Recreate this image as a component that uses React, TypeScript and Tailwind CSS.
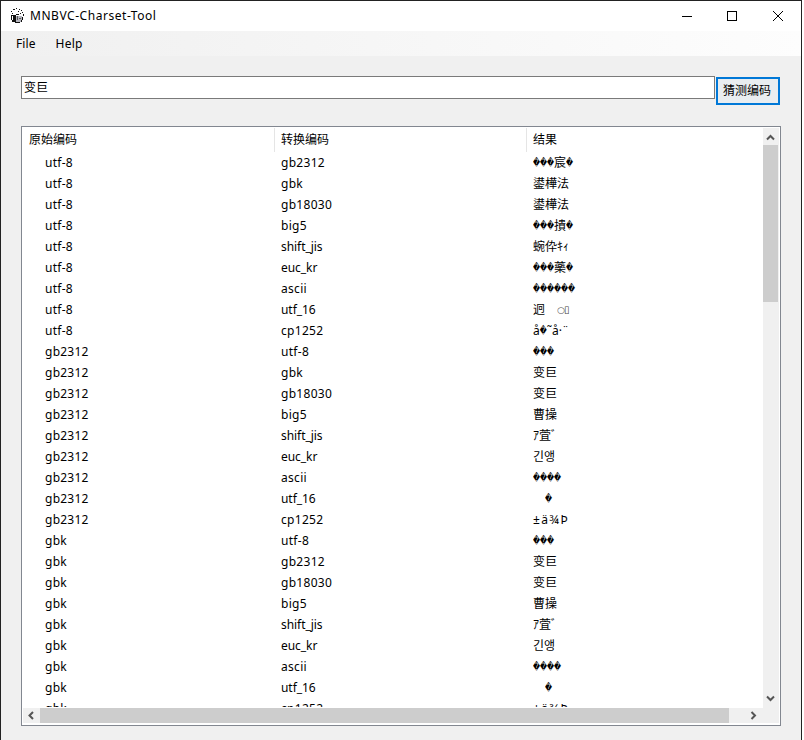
import React from "react";

const ROWS: [string, string, string][] = [
  ["utf-8", "gb2312", "���宸�"],
  ["utf-8", "gbk", "鍙樺法"],
  ["utf-8", "gb18030", "鍙樺法"],
  ["utf-8", "big5", "���撌�"],
  ["utf-8", "shift_jis", "蜿伜ｷｨ"],
  ["utf-8", "euc_kr", "���\u85E5�"],
  ["utf-8", "ascii", "������"],
  ["utf-8", "utf_16", "迥\u3000○▯"],
  ["utf-8", "cp1252", "å�˜å·¨"],
  ["gb2312", "utf-8", "���"],
  ["gb2312", "gbk", "变巨"],
  ["gb2312", "gb18030", "变巨"],
  ["gb2312", "big5", "曹操"],
  ["gb2312", "shift_jis", "ｱ萓ﾞ"],
  ["gb2312", "euc_kr", "긴앵"],
  ["gb2312", "ascii", "����"],
  ["gb2312", "utf_16", "\u3000�"],
  ["gb2312", "cp1252", "±ä¾Þ"],
  ["gbk", "utf-8", "���"],
  ["gbk", "gb2312", "变巨"],
  ["gbk", "gb18030", "变巨"],
  ["gbk", "big5", "曹操"],
  ["gbk", "shift_jis", "ｱ萓ﾞ"],
  ["gbk", "euc_kr", "긴앵"],
  ["gbk", "ascii", "����"],
  ["gbk", "utf_16", "\u3000�"],
  ["gbk", "cp1252", "±ä¾Þ"],
];

function Result({ text }: { text: string }) {
  const parts = text.split(/([�]+|[○]|[▯]|±ä¾Þ)/).filter(Boolean);
  return (
    <span className="flex h-[21px] items-center">
      {parts.map((p, i) => {
        if (p[0] === "�")
          return (
            <span key={i} className="inline-block scale-y-[1.5] font-['DejaVu_Sans'] text-[6.83px] leading-[12px]">{p}</span>
          );
        if (p === "○")
          return <span key={i} className="w-[7px] font-['DejaVu_Sans'] text-[9px] leading-[12px] text-[#555]">{p}</span>;
        if (p === "▯")
          return <span key={i} className="w-[5px] font-['DejaVu_Sans'] text-[10px] leading-[12px] text-[#444]">{p}</span>;
        if (p[0] === "±") return <span key={i} className="tracking-[1.5px]">{p}</span>;
        return <span key={i}>{p}</span>;
      })}
    </span>
  );
}

function Chevron({ d, className }: { d: string; className: string }) {
  return (
    <svg className={className} viewBox="0 0 9 9" width="9" height="9">
      <path d={d} fill="none" stroke="#555" strokeWidth="2" />
    </svg>
  );
}

function AppIcon() {
  return (
    <svg width="16" height="16" viewBox="0 0 16 16" shapeRendering="crispEdges">
      <path d="M3 1h2v1H3zM6 0h1v1H6zM9 1h1v1H9zM11 2h1v1h-1zM1 3h1v1H1zM8 3h1v1H8zM12 4h1v1h-1zM2 5h1v1H2zM10 5h1v1h-1zM13 6h1v2h-1zM1 7h5v1H1zM1 8h1v4H1zM3 8h3v6H3zM6 6h3v1H6zM2 12h1v2H2zM5 14h5v1H5zM12 9h1v3h-1zM11 12h1v2h-1z" fill="#111" />
      <path d="M6 8h6v4h-1v2H6z" fill="#b4b4bc" />
      <path d="M7 8h1v4H7zM9 10h2v1H9z" fill="#555" />
    </svg>
  );
}

export default function App() {
  return (
    <div className="h-[740px] w-[804px] overflow-hidden bg-white font-['Noto_Sans','Noto_Sans_CJK_SC',sans-serif] text-[12px] text-black">
      <div className="flex h-full w-[802px] flex-col border-x border-t border-[#222] bg-[#f0f0f0]">
        <header className="flex h-[30px] shrink-0 items-center bg-white pl-[9px]">
          <AppIcon />
          <span className="ml-[4px] text-[12px] tracking-[0.54px]">MNBVC-Charset-Tool</span>
          <svg className="mr-[17px] ml-auto" width="103" height="12" viewBox="0 0 103 12" fill="none" stroke="#000">
            <path d="M1 6.5h10" />
            <rect x="46.5" y="1.5" width="9" height="9" />
            <path d="M92 1l10 10m0-10l-10 10" />
          </svg>
        </header>
        <nav className="flex h-[25px] shrink-0 items-center gap-[20px] bg-linear-to-r from-[#f0f0f0] to-[#fdfdfd] pt-px pl-[15px]">
          <span className="tracking-[0.1px]">File</span>
          <span className="tracking-[0.2px]">Help</span>
        </nav>
        <main className="flex flex-col pt-[20px] pl-[20px]">
          <div className="flex h-[30px] items-start gap-px">
            <div className="flex h-[23px] w-[694px] items-center border border-[#7a7a7a] bg-white pl-[2px]">变巨</div>
            <button className="mt-px flex h-[28px] w-[64px] items-center justify-center border-2 border-[#0078d7] bg-[#e9edf0] pr-[2px]">猜测编码</button>
          </div>
          <section className="mt-[20px] flex h-[600px] w-[760px] flex-col border border-[#828790] bg-white p-px">
            <div className="flex min-h-0 flex-1">
              <div className="mb-px min-w-0 flex-1 overflow-hidden">
                <div className="flex h-[24px] text-[12px] leading-[24px]">
                  <span className="w-[252px] border-r border-[#e5e5e5] pl-[6px]">原始编码</span>
                  <span className="w-[252px] border-r border-[#e5e5e5] pl-[6px]">转换编码</span>
                  <span className="pl-[6px]">结果</span>
                </div>
                {ROWS.map(([source, target, result], i) => (
                  <div key={i} className="flex h-[21px] leading-[21px] whitespace-pre">
                    <span className="w-[252px] pl-[22px] tracking-[0.25px]">{source}</span>
                    <span className={"w-[252px] pl-[6px] " + (target.includes("_") ? "tracking-[-0.05px]" : "tracking-[0.3px]")}>{target}</span>
                    <span className="pl-[6px]"><Result text={result} /></span>
                  </div>
                ))}
              </div>
              <div className="flex w-[16px] flex-col items-center bg-[#f0f0f0]">
                <Chevron className="mt-[5px] mr-px shrink-0" d="M1 6.5L4.5 3L8 6.5" />
                <div className="mt-[3px] h-[157px] w-[15px] shrink-0 self-start bg-[#cdcdcd]" />
                <Chevron className="mt-auto mr-px mb-[5px] shrink-0" d="M1 2.5L4.5 6L8 2.5" />
              </div>
            </div>
            <div className="mb-px flex h-[15px] items-center bg-[#f0f0f0]">
              <Chevron className="ml-[4px]" d="M6 1L2.5 4.5L6 8" />
              <div className="ml-[4px] h-full w-[689px] bg-[#cdcdcd]" />
              <Chevron className="ml-[20px]" d="M2.5 1L6 4.5L2.5 8" />
            </div>
          </section>
        </main>
      </div>
    </div>
  );
}
